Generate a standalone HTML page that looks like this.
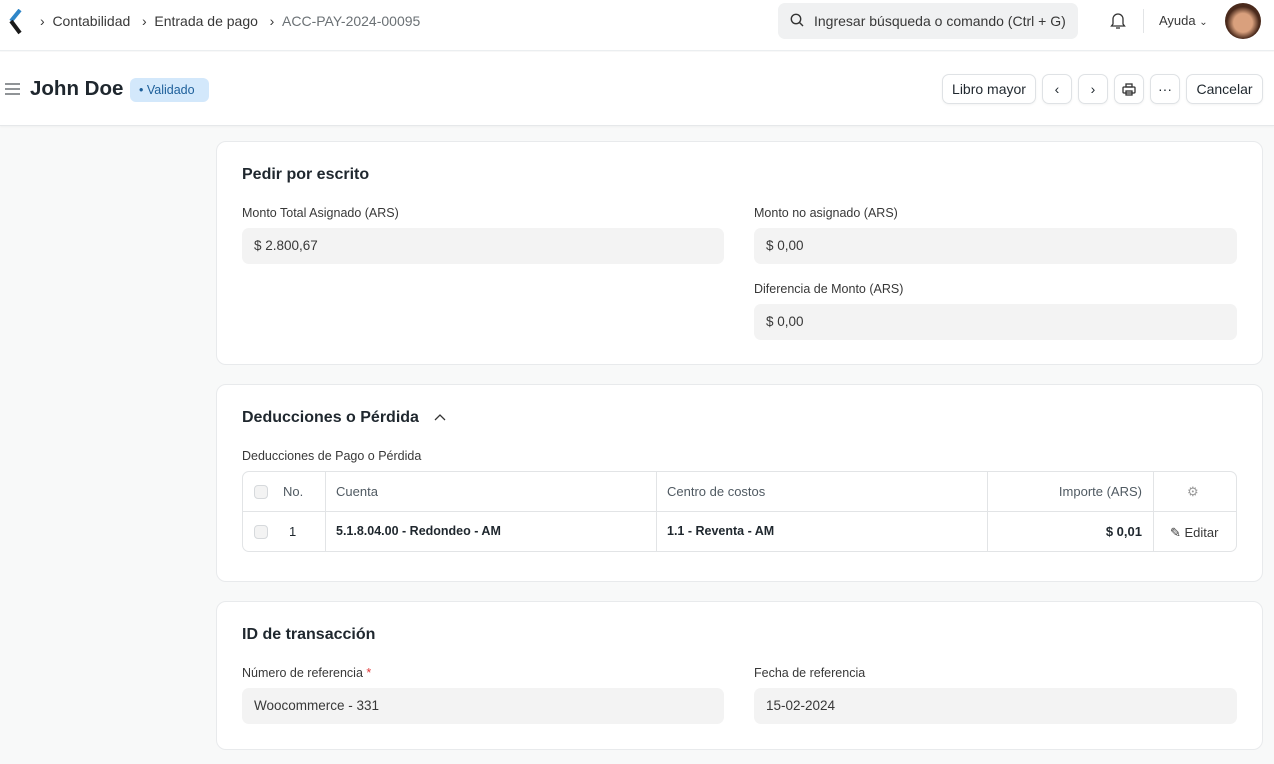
<!DOCTYPE html>
<html><head><meta charset="utf-8"><style>
*{box-sizing:border-box;margin:0;padding:0}
body{width:1274px;height:764px;overflow:hidden;background:#f8f9f9;font-family:"Liberation Sans",sans-serif;color:#1f272e;position:relative}
.abs{position:absolute}
.top{left:0;top:0;width:1274px;height:51px;background:#fff;border-bottom:1px solid #ebeef0}
.ph{left:0;top:52px;width:1274px;height:74px;background:#fff;border-bottom:1px solid #e6e8ea;box-shadow:0 1px 2px rgba(0,0,0,.04)}
.bc{font-size:14px;color:#383838;top:12px}
.btn{top:74px;height:30px;border:1px solid #dfe2e5;border-radius:7px;background:#fff;font-size:14px;display:flex;align-items:center;justify-content:center;color:#1f272e;box-shadow:0 1px 2px rgba(0,0,0,.05)}
.card{left:216px;width:1047px;background:#fff;border:1px solid #e8eaec;border-radius:10px}
.h{font-size:16px;font-weight:bold;color:#1f272e}
.lbl{font-size:12.5px;color:#383838}
.inp{height:36px;width:482px;background:#f3f3f3;border-radius:7px;font-size:13.5px;color:#383838;padding:10px 12px}
.cell{font-size:13px;color:#505a62}
.cb{width:14px;height:14px;border:1px solid #d6d9dc;border-radius:4px;background:#f3f3f3}
</style></head><body>
<div class="abs top"></div>
<svg class="abs" style="left:8px;top:9px" width="14" height="26" viewBox="0 0 14 26"><path d="M12 1 L3 12" stroke="#2f86c8" stroke-width="4"/><path d="M3 12 L12 24" stroke="#1a1a1a" stroke-width="4"/></svg>
<div class="abs bc" style="left:40px;top:13px">›&nbsp;&nbsp;Contabilidad&nbsp;&nbsp;&nbsp;›&nbsp;&nbsp;Entrada de pago&nbsp;&nbsp;&nbsp;›&nbsp;&nbsp;<span style="color:#6b7175">ACC-PAY-2024-00095</span></div>
<div class="abs" style="left:778px;top:3px;width:300px;height:36px;background:#f0f1f2;border-radius:7px"></div>
<svg class="abs" style="left:790px;top:13px" width="14" height="14" viewBox="0 0 14 14" fill="none" stroke="#333" stroke-width="1.4"><circle cx="6" cy="6" r="4.7"/><path d="M9.5 9.5 13 13"/></svg>
<div class="abs" style="left:814px;top:13px;font-size:14px;color:#383838">Ingresar búsqueda o comando (Ctrl + G)</div>
<svg class="abs" style="left:1109px;top:11px" width="18" height="19" viewBox="0 0 18 19" fill="none" stroke="#333" stroke-width="1.3"><path d="M4 13V8a5 5 0 0 1 10 0v5l1.5 2h-13z"/><path d="M7 17h4"/></svg>
<div class="abs" style="left:1143px;top:9px;width:1px;height:24px;background:#e2e4e6"></div>
<div class="abs" style="left:1159px;top:13px;font-size:13px;color:#383838">Ayuda <span style="font-size:10px">⌄</span></div>
<div class="abs" style="left:1225px;top:3px;width:36px;height:36px;border-radius:50%;background:radial-gradient(circle at 50% 55%,#d9a07d 0 35%,#4a2a1c 60%)"></div>
<div class="abs ph"></div>
<svg class="abs" style="left:5px;top:83px" width="15" height="12" stroke="#6b7175" stroke-width="1.5"><path d="M0 1h15M0 6h15M0 11h15"/></svg>
<div class="abs" style="left:30px;top:77px;font-size:20.5px;font-weight:bold">John Doe</div>
<div class="abs" style="left:130px;top:78px;width:79px;height:24px;background:#d3e8fb;border-radius:6px;font-size:12.5px;color:#1d5f9a;padding:5px 0 0 9px">• Validado</div>
<div class="abs btn" style="left:942px;width:94px">Libro mayor</div>
<div class="abs btn" style="left:1042px;width:30px">‹</div>
<div class="abs btn" style="left:1078px;width:30px">›</div>
<div class="abs btn" style="left:1114px;width:30px"><svg width="14" height="13" fill="none" stroke="#333" stroke-width="1.3"><rect x="1" y="4" width="12" height="6" rx="1"/><rect x="4" y="1" width="6" height="3"/><rect x="4" y="8" width="6" height="4"/></svg></div>
<div class="abs btn" style="left:1150px;width:30px">···</div>
<div class="abs btn" style="left:1186px;width:77px">Cancelar</div>

<div class="abs card" style="top:141px;height:224px"></div>
<div class="abs h" style="left:242px;top:166px">Pedir por escrito</div>
<div class="abs lbl" style="left:242px;top:206px">Monto Total Asignado (ARS)</div>
<div class="abs inp" style="left:242px;top:228px">$ 2.800,67</div>
<div class="abs lbl" style="left:754px;top:206px">Monto no asignado (ARS)</div>
<div class="abs inp" style="left:754px;top:228px;width:483px">$ 0,00</div>
<div class="abs lbl" style="left:754px;top:282px">Diferencia de Monto (ARS)</div>
<div class="abs inp" style="left:754px;top:304px;width:483px">$ 0,00</div>

<div class="abs card" style="top:384px;height:198px"></div>
<div class="abs h" style="left:242px;top:409px">Deducciones o Pérdida</div>
<svg class="abs" style="left:434px;top:413px" width="12" height="8" fill="none" stroke="#333" stroke-width="1.3"><path d="M1 7 6 2l5 5"/></svg>
<div class="abs lbl" style="left:242px;top:449px">Deducciones de Pago o Pérdida</div>
<div class="abs" style="left:242px;top:471px;width:995px;height:81px;border:1px solid #e2e4e6;border-radius:7px;overflow:hidden">
<div class="abs" style="left:0;top:39px;width:995px;height:1px;background:#e2e4e6"></div>
<div class="abs" style="left:82px;top:0;width:1px;height:81px;background:#e2e4e6"></div>
<div class="abs" style="left:413px;top:0;width:1px;height:81px;background:#e2e4e6"></div>
<div class="abs" style="left:744px;top:0;width:1px;height:81px;background:#e2e4e6"></div>
<div class="abs" style="left:910px;top:0;width:1px;height:81px;background:#e2e4e6"></div>
<div class="abs cb" style="left:11px;top:13px"></div>
<div class="abs cell" style="left:40px;top:12px">No.</div>
<div class="abs cell" style="left:93px;top:12px">Cuenta</div>
<div class="abs cell" style="left:424px;top:12px">Centro de costos</div>
<div class="abs cell" style="left:800px;top:12px;width:99px;text-align:right">Importe (ARS)</div>
<div class="abs cell" style="left:944px;top:12px;color:#999">⚙</div>
<div class="abs cb" style="left:11px;top:53px"></div>
<div class="abs cell" style="left:46px;top:52px;color:#1f272e">1</div>
<div class="abs cell" style="left:93px;top:52px;color:#1f272e;font-weight:bold;font-size:12.5px">5.1.8.04.00 - Redondeo - AM</div>
<div class="abs cell" style="left:424px;top:52px;color:#1f272e;font-weight:bold;font-size:12.5px">1.1 - Reventa - AM</div>
<div class="abs cell" style="left:800px;top:52px;width:99px;text-align:right;color:#1f272e;font-weight:bold">$ 0,01</div>
<div class="abs cell" style="left:927px;top:53px;color:#383838">✎ Editar</div>
</div>

<div class="abs card" style="top:601px;height:149px"></div>
<div class="abs h" style="left:242px;top:626px">ID de transacción</div>
<div class="abs lbl" style="left:242px;top:666px">Número de referencia <span style="color:#e03636">*</span></div>
<div class="abs inp" style="left:242px;top:688px">Woocommerce - 331</div>
<div class="abs lbl" style="left:754px;top:666px">Fecha de referencia</div>
<div class="abs inp" style="left:754px;top:688px;width:483px">15-02-2024</div>
</body></html>
